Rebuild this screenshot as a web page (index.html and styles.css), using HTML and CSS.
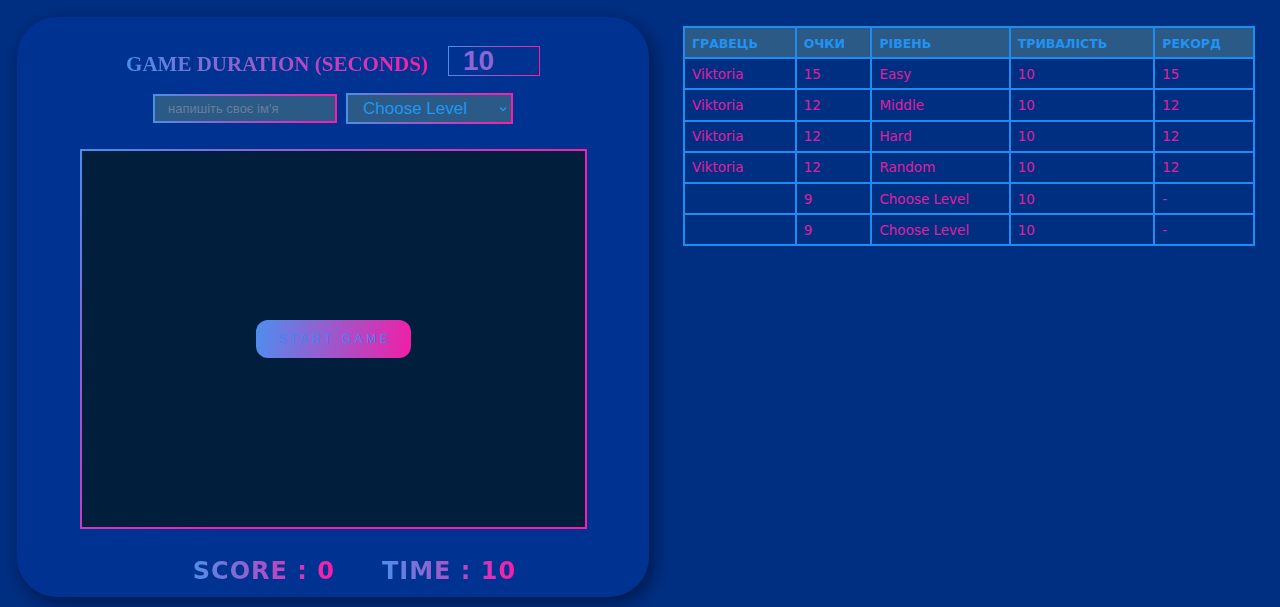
FILE: index.html
```html
<!DOCTYPE html>
<html lang="uk">
<head>
<meta charset="utf-8">
<title>Game</title>
<link rel="stylesheet" href="styles.css">
</head>
<body>
<main class="page">
  <section class="card">
    <div class="duration-row">
      <h1 class="duration-title">GAME DURATION (SECONDS)</h1>
      <input class="duration-input" type="text" value="10">
    </div>
    <div class="controls-row">
      <input class="name-input" type="text" placeholder="напишіть своє ім'я">
      <div class="select-wrap">
        <select class="level-select">
          <option>Choose Level</option>
          <option>Easy</option>
          <option>Middle</option>
          <option>Hard</option>
          <option>Random</option>
        </select>
        <svg class="chevron" width="8" height="6" viewBox="0 0 8 6"><path d="M1 1.5 L4 4.5 L7 1.5" fill="none" stroke="#2196f3" stroke-width="1.4"/></svg>
      </div>
    </div>
    <div class="game-area">
      <button class="start-btn">START GAME</button>
    </div>
    <div class="stats-row">
      <span class="stat">SCORE : 0</span>
      <span class="stat">TIME : 10</span>
    </div>
  </section>
  <table class="results">
    <thead>
      <tr><th class="c1">Гравець</th><th class="c2">Очки</th><th class="c3">Рівень</th><th class="c4">Тривалість</th><th class="c5">Рекорд</th></tr>
    </thead>
    <tbody>
      <tr><td>Viktoria</td><td>15</td><td>Easy</td><td>10</td><td>15</td></tr>
      <tr><td>Viktoria</td><td>12</td><td>Middle</td><td>10</td><td>12</td></tr>
      <tr><td>Viktoria</td><td>12</td><td>Hard</td><td>10</td><td>12</td></tr>
      <tr><td>Viktoria</td><td>12</td><td>Random</td><td>10</td><td>12</td></tr>
      <tr><td></td><td>9</td><td>Choose Level</td><td>10</td><td>-</td></tr>
      <tr><td></td><td>9</td><td>Choose Level</td><td>10</td><td>-</td></tr>
    </tbody>
  </table>
</main>
</body>
</html>
```

FILE: styles.css
```css
html, body {
  margin: 0;
  padding: 0;
  background: #002f82;
  height: 100%;
  overflow: hidden;
}

.page {
  display: flex;
  align-items: flex-start;
  padding: 17px;
  gap: 34px;
}

.card {
  width: 632px;
  height: 580px;
  box-sizing: border-box;
  background: #003391;
  border-radius: 40px;
  box-shadow: 4px 6px 18px rgba(0, 10, 40, 0.6);
  padding-top: 29px;
  display: flex;
  flex-direction: column;
  align-items: center;
}

.duration-row {
  display: flex;
  align-items: center;
  gap: 20px;
  height: 30px;
}

.duration-title {
  margin: 0;
  font-family: "Liberation Serif", serif;
  font-weight: bold;
  font-size: 21px;
  background: linear-gradient(90deg, #4a8fe6, #ff1aa8);
  -webkit-background-clip: text;
  background-clip: text;
  color: transparent;
  padding-top: 6px;
}

.duration-input {
  width: 92px;
  height: 30px;
  box-sizing: border-box;
  background: transparent;
  border: 1px solid;
  border-image: linear-gradient(90deg, #4a8fe6, #ff1aa8) 1;
  font-family: "Liberation Sans", Arial, sans-serif;
  font-weight: bold;
  font-size: 28px;
  color: #8c66d8;
  padding: 0 0 0 14px;
  outline: none;
}

.controls-row {
  display: flex;
  align-items: center;
  gap: 9px;
  margin-top: 17px;
}

.name-input {
  width: 184px;
  height: 29px;
  box-sizing: border-box;
  background: #2b5a87;
  border: 2px solid;
  border-image: linear-gradient(90deg, #4a8fe6, #ff1aa8) 1;
  padding: 0 0 0 13px;
  font-family: "Liberation Sans", Arial, sans-serif;
  font-size: 13px;
  color: #2196f3;
  outline: none;
}

.name-input::placeholder {
  color: #687e9a;
}

.select-wrap {
  position: relative;
  width: 167px;
  height: 31px;
}

.level-select {
  appearance: none;
  -webkit-appearance: none;
  width: 100%;
  height: 100%;
  box-sizing: border-box;
  background: #2b5a87;
  border: 2px solid;
  border-image: linear-gradient(90deg, #4a8fe6, #ff1aa8) 1;
  padding: 0 0 0 15px;
  font-family: "Liberation Sans", Arial, sans-serif;
  font-size: 17px;
  color: #2196f3;
  outline: none;
}

.chevron {
  position: absolute;
  right: 6px;
  top: 13px;
  pointer-events: none;
}

.game-area {
  margin-top: 25px;
  width: 507px;
  height: 380px;
  box-sizing: border-box;
  background: #011e3d;
  border: 2px solid;
  border-image: linear-gradient(135deg, #4a8fe6, #ff1aa8 60%) 1;
  display: flex;
  align-items: center;
  justify-content: center;
}

.start-btn {
  width: 155px;
  height: 38px;
  border: none;
  border-radius: 12px;
  background: linear-gradient(100deg, #4d8ff0, #f21ea6);
  color: #3f84ee;
  font-family: "Liberation Sans", Arial, sans-serif;
  font-size: 12px;
  letter-spacing: 3.6px;
  padding: 0 0 0 3px;
  margin-left: 1px;
  margin-top: 0;
}

.stats-row {
  display: flex;
  gap: 47px;
  margin-top: 28px;
  padding-left: 43px;
}

.stat {
  font-family: "DejaVu Sans", sans-serif;
  font-weight: bold;
  font-size: 24px;
  letter-spacing: 1px;
  background: linear-gradient(90deg, #4f8ee8, #ff1aa8);
  -webkit-background-clip: text;
  background-clip: text;
  color: transparent;
}

.results {
  margin-top: 9px;
  width: 572px;
  border-collapse: separate;
  border-spacing: 0;
  border: 1px solid #1e8cf0;
  font-family: "DejaVu Sans", sans-serif;
}

.results th,
.results td {
  border: 1px solid #1e8cf0;
  height: 31.2px;
  box-sizing: border-box;
  padding: 0 0 0 7px;
  text-align: left;
}

.results th {
  background: #2b5a87;
  color: #2193f3;
  text-transform: uppercase;
  font-size: 12.5px;
  font-weight: bold;
  padding-top: 1px;
}

.results td {
  color: #e01ea0;
  font-size: 13.5px;
}

.c1 { width: 112px; }
.c2 { width: 76px; }
.c3 { width: 139px; }
.c4 { width: 145px; }
.c5 { width: 100px; }
```
